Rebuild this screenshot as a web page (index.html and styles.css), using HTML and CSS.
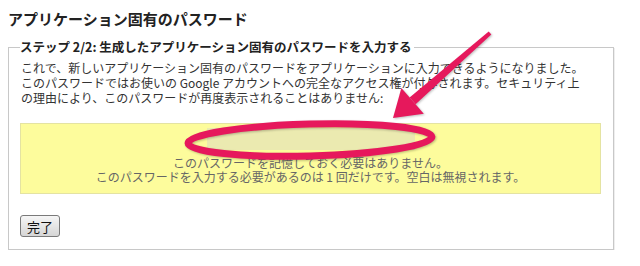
FILE: index.html
```html
<!DOCTYPE html>
<html lang="ja">
  <head>
    <meta charset="UTF-8" />
    <title>アプリケーション固有のパスワード</title>
    <link rel="stylesheet" href="styles.css">
  </head>
  <body>
    <div class="page">
      <h1 class="title">アプリケーション固有のパスワード</h1>
      <!-- ステップ 2 -->
      <fieldset class="step">
        <legend>ステップ 2/2: 生成したアプリケーション固有のパスワードを入力する</legend>
        <p class="intro">
          これで、新しいアプリケーション固有のパスワードをアプリケーションに入力できるようになりました。<br>
          このパスワードではお使いの Google アカウントへの完全なアクセス権が付与されます。セキュリティ上<br>
          の理由により、このパスワードが再度表示されることはありません:
        </p>
        <div class="pw-box">
          <div class="pw-field"></div>
          <div class="pw-dash">-</div>
          <p class="pw-note">
            このパスワードを記憶しておく必要はありません。<br>
            このパスワードを入力する必要があるのは 1 回だけです。空白は無視されます。
          </p>
        </div>
        <button class="done">完了</button>
      </fieldset>
    </div>

    <!-- 注釈（矢印と楕円） -->
    <svg class="marks" width="640" height="266" viewBox="0 0 640 266">
      <ellipse cx="310" cy="140" rx="122" ry="16" transform="rotate(-1.5 310 140)"
        fill="none" stroke="#e6185c" stroke-width="7" />
      <polygon points="491.3,34.5 488.7,31.5 409.6,97.5 415.6,104.3" fill="#e6185c" />
      <polygon points="393,118 401.4,88.1 423.8,113.7" fill="#e6185c" />
    </svg>
  </body>
</html>
```

FILE: styles.css
```css
body {
  margin: 0;
  background: #fff;
  color: #333;
  font-family: "Noto Sans CJK JP", "Noto Sans", sans-serif;
}
.page {
  position: relative;
  width: 606px;
  padding: 9px 0 0 8px;
}
.title {
  margin: 0 0 10px;
  font-size: 15px;
  line-height: 20px;
  font-weight: bold;
  color: #222;
}
.step {
  margin: 0;
  padding: 0 12px 12px 11px;
  border: 1px solid #c8c8c8;
  box-shadow: 1px 1px 0 #eee;
}
.step legend {
  padding: 0 2px 0 0;
  font-size: 12.5px;
  line-height: 16px;
  font-weight: bold;
  color: #222;
}
.intro {
  margin: 5px 0 18px;
  padding-left: 1px;
  font-size: 12px;
  line-height: 15px;
  white-space: nowrap;
}
.pw-box {
  padding: 4px 0 9px;
  background: #fdfc9c;
  border: 1px solid #e4e3a2;
  text-align: center;
  color: #666;
}
.pw-field {
  width: 208px;
  height: 22px;
  margin: 0 auto;
  background: #ebeab0;
}
.pw-dash {
  height: 6px;
  line-height: 4px;
  font-size: 12px;
  padding-right: 40px;
  color: #333;
}
.pw-note {
  margin: 0;
  font-size: 12px;
  line-height: 14px;
}
.done {
  display: block;
  margin-top: 21px;
  height: 22px;
  padding: 0 6px;
  font-family: "Noto Sans CJK JP", sans-serif;
  font-size: 13px;
  color: #111;
  background: linear-gradient(#f6f6f6, #d6d6d6);
  border: 1px solid #7a7a7a;
  border-radius: 3px;
}
.marks {
  position: absolute;
  top: 0;
  left: 0;
  pointer-events: none;
  filter: drop-shadow(1px 1px 1px rgba(0, 0, 0, 0.25));
}
```
